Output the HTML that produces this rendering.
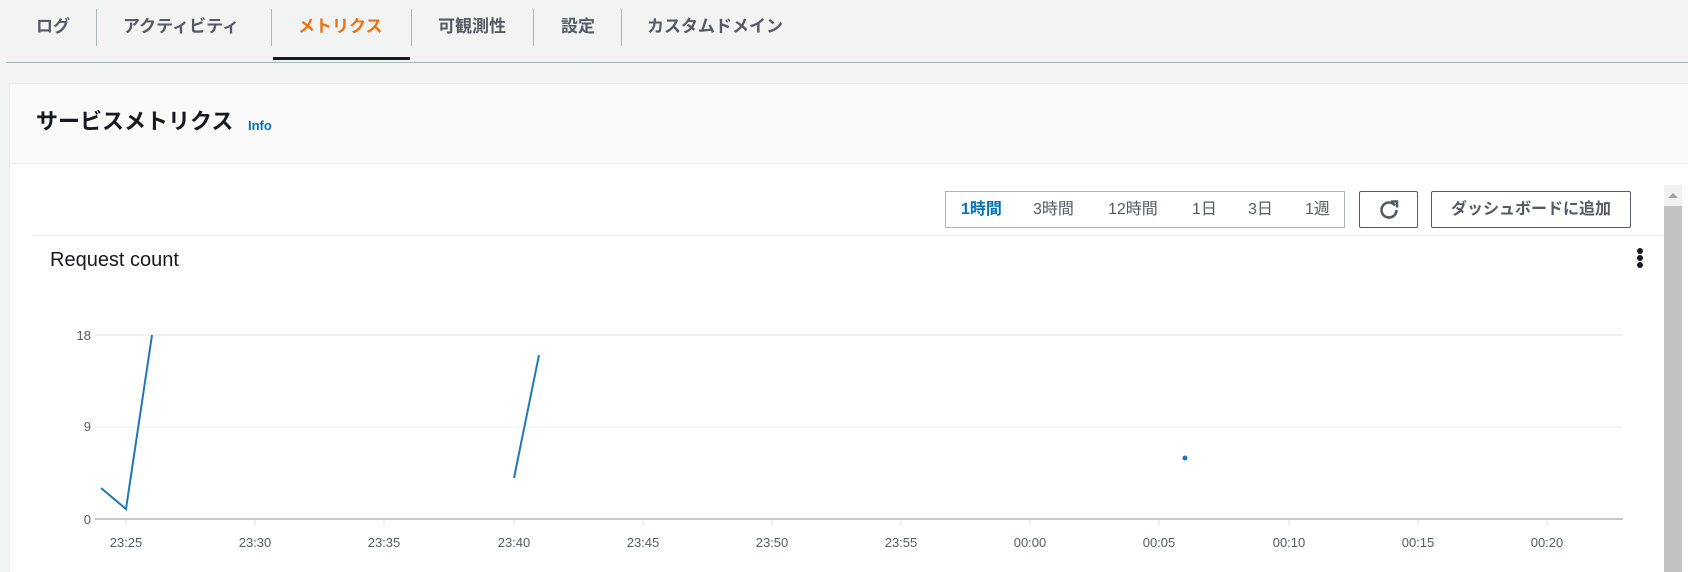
<!DOCTYPE html>
<html><head><meta charset="utf-8"><style>
*{margin:0;padding:0;box-sizing:border-box}
body{width:1688px;height:572px;overflow:hidden;background:#f2f3f3;font-family:"Liberation Sans","Noto Sans CJK JP",sans-serif;position:relative;color:#16191f}
.a{position:absolute;white-space:nowrap}
.tab{position:absolute;top:15px;font-size:17px;font-weight:bold;color:#545b64;line-height:24px}
.sep{position:absolute;top:9px;width:1px;height:37px;background:#aab7b8}
.seg{position:absolute;top:200px;font-size:16px;color:#545b64;line-height:20px}
</style></head><body>
<div class="tab" style="left:36px">ログ</div>
<div class="sep" style="left:96px"></div>
<div class="tab" style="left:123px">アクティビティ</div>
<div class="sep" style="left:271px"></div>
<div class="tab" style="left:298px;color:#ec7211">メトリクス</div>
<div class="sep" style="left:411px"></div>
<div class="tab" style="left:438px">可観測性</div>
<div class="sep" style="left:533px"></div>
<div class="tab" style="left:561px">設定</div>
<div class="sep" style="left:621px"></div>
<div class="tab" style="left:647px">カスタムドメイン</div>
<div class="a" style="left:273px;top:57px;width:137px;height:3px;background:#16191f"></div>
<div class="a" style="left:6px;top:62px;right:0;height:1px;background:#aab7b8"></div>

<div class="a" style="left:9px;top:83px;right:0;bottom:0;background:#fff;border:1px solid #eaeded;border-right:none;border-bottom:none"></div>
<div class="a" style="left:10px;top:84px;right:0;height:80px;background:#fafafa;border-bottom:1px solid #eaeded"></div>
<div class="a" style="left:36px;top:107px;font-size:22px;font-weight:bold;line-height:30px">サービスメトリクス</div>
<div class="a" style="left:248px;top:118px;font-size:13px;font-weight:bold;color:#0073bb">Info</div>

<div class="a" style="left:945px;top:191px;width:400px;height:37px;border:1px solid #aab7b8;background:#fff"></div>
<div class="seg" style="left:961px;color:#0073bb;font-weight:bold">1時間</div>
<div class="seg" style="left:1033px">3時間</div>
<div class="seg" style="left:1108px">12時間</div>
<div class="seg" style="left:1192px">1日</div>
<div class="seg" style="left:1248px">3日</div>
<div class="seg" style="left:1305px">1週</div>
<div class="a" style="left:1359px;top:191px;width:59px;height:37px;border:1px solid #545b64;border-radius:2px"></div>
<svg class="a" style="left:1377px;top:198px" width="24" height="24" viewBox="0 0 24 24"><path d="M18 7.5A7.5 7.5 0 1 0 19.5 12" fill="none" stroke="#545b64" stroke-width="2.6"/><path d="M14 3.5h6v6" fill="none" stroke="#545b64" stroke-width="2.6"/></svg>
<div class="a" style="left:1431px;top:191px;width:200px;height:37px;border:1px solid #545b64;border-radius:2px;font-size:16px;font-weight:bold;color:#545b64;text-align:center;line-height:35px">ダッシュボードに追加</div>

<div class="a" style="left:1664px;top:185px;width:18px;bottom:0;background:#f1f1f1"></div>
<div class="a" style="left:1664px;top:206px;width:18px;bottom:0;background:#c1c1c1"></div>
<div class="a" style="left:1668px;top:193px;width:0;height:0;border-left:5px solid transparent;border-right:5px solid transparent;border-bottom:5px solid #a3a3a3"></div>

<div class="a" style="left:34px;top:235px;width:1629px;height:1px;background:#eaeded"></div>
<div class="a" style="left:50px;top:248px;font-size:20px;line-height:24px;color:#16191f">Request count</div>
<div class="a" style="left:1637px;top:248px;width:6px;height:6px;border-radius:3px;background:#16191f"></div>
<div class="a" style="left:1637px;top:255px;width:6px;height:6px;border-radius:3px;background:#16191f"></div>
<div class="a" style="left:1637px;top:262px;width:6px;height:6px;border-radius:3px;background:#16191f"></div>

<svg class="a" style="left:0;top:0" width="1688" height="572">
<g font-family="Liberation Sans, sans-serif" font-size="13" fill="#545b64">
<text x="91" y="340" text-anchor="end">18</text>
<text x="91" y="431" text-anchor="end">9</text>
<text x="91" y="524" text-anchor="end">0</text>
</g>
<line x1="95" y1="335" x2="1623" y2="335" stroke="#eaeded" stroke-width="1.5"/>
<line x1="95" y1="427" x2="1623" y2="427" stroke="#eaeded"/>
<line x1="95" y1="519" x2="1623" y2="519" stroke="#c8c8c8" stroke-width="2"/>
<g stroke="#e0e0e0">
<line x1="126" y1="520" x2="126" y2="526"/><line x1="255" y1="520" x2="255" y2="526"/><line x1="384" y1="520" x2="384" y2="526"/><line x1="514" y1="520" x2="514" y2="526"/><line x1="643" y1="520" x2="643" y2="526"/><line x1="772" y1="520" x2="772" y2="526"/><line x1="901" y1="520" x2="901" y2="526"/><line x1="1030" y1="520" x2="1030" y2="526"/><line x1="1159" y1="520" x2="1159" y2="526"/><line x1="1289" y1="520" x2="1289" y2="526"/><line x1="1418" y1="520" x2="1418" y2="526"/><line x1="1547" y1="520" x2="1547" y2="526"/>
</g>
<g font-family="Liberation Sans, sans-serif" font-size="13" fill="#545b64" text-anchor="middle">
<text x="126" y="547">23:25</text><text x="255" y="547">23:30</text><text x="384" y="547">23:35</text><text x="514" y="547">23:40</text><text x="643" y="547">23:45</text><text x="772" y="547">23:50</text><text x="901" y="547">23:55</text><text x="1030" y="547">00:00</text><text x="1159" y="547">00:05</text><text x="1289" y="547">00:10</text><text x="1418" y="547">00:15</text><text x="1547" y="547">00:20</text>
</g>
<polyline points="101,488 126,509 152,335" fill="none" stroke="#1f77b4" stroke-width="2"/>
<polyline points="514,478 539,355" fill="none" stroke="#1f77b4" stroke-width="2"/>
<circle cx="1185" cy="458" r="2.5" fill="#1f77b4"/>
</svg>
</body></html>
